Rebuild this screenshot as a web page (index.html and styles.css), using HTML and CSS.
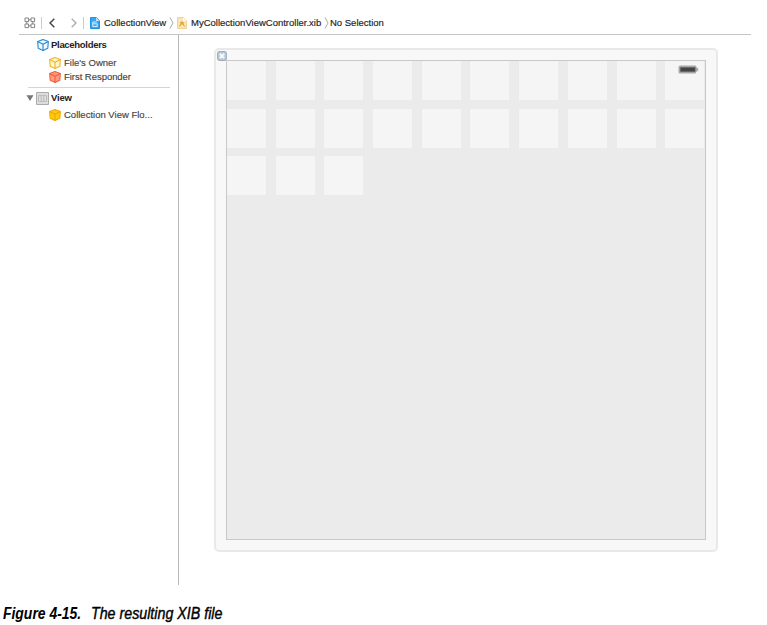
FILE: index.html
```html
<!DOCTYPE html>
<html lang="en">
<head>
<meta charset="utf-8">
<title>MyCollectionViewController.xib</title>
<link rel="stylesheet" href="styles.css">
</head>
<body>
<svg width="0" height="0" class="defs" aria-hidden="true">
  <symbol id="cube" viewBox="0 0 12 12">
    <path d="M6 .6 11.300 2.600 10.800 9.200 6 11.400 1.200 9.200 .7 2.600Z"/>
    <path d="M.7 2.600 6 5.200 11.300 2.600M6 5.200V11.400" fill="none"/>
  </symbol>
</svg>
<div class="window">
  <header class="jumpbar">
    <svg class="grid-icon" width="12" height="12" viewBox="0 0 12 12"><path d="M1 1h3.600v3.600H1zM7 1h3.600v3.600H7zM1 7h3.600v3.600H1zM7 7h3.600v3.600H7zM4.600 2.800H7M4.600 8.800H7M2.800 4.600V7M8.800 4.600V7"/></svg>
    <i class="rule r1"></i>
    <svg class="back" width="6" height="10" viewBox="0 0 6 10"><path d="M5.300 .8 1 5l4.300 4.200"/></svg>
    <svg class="forward" width="6" height="10" viewBox="0 0 6 10"><path d="M.7 .8 5 5 .7 9.200"/></svg>
    <i class="rule r2"></i>
    <svg class="doc" width="10" height="12" viewBox="0 0 10 12"><path d="M.5.5h5.700l3.300 3.200v7.800h-9z" fill="#35a7f2" stroke="#2293e2"/><path d="M6 .5v3.400h3.500" fill="#bfe5ff"/><path d="M2.800 5h4M2.800 5v4.500h4.400V6.800H3" fill="none" stroke="#d8f0ff"/></svg>
    <span class="crumb c1">CollectionView</span>
    <svg class="sep" width="5" height="12" viewBox="0 0 5 12"><path d="m1 .5 3 5.500-3 5.500"/></svg>
    <svg class="doc xib" width="10" height="12" viewBox="0 0 10 12"><path d="M.5.5h5.700l3.300 3.200v7.800h-9z" fill="#fbe5b4" stroke="#efd295"/><path d="M6 .5v3.400h3.500" fill="#fffaf0"/><path d="m2.500 9.500 2.500-5 2.500 5M3 5.200l4.200 3.200M2.500 8.500 7 5.500" fill="none" stroke="#e4a63c"/></svg>
    <span class="crumb c2">MyCollectionViewController.xib</span>
    <svg class="sep s2" width="5" height="12" viewBox="0 0 5 12"><path d="m1 .5 3 5.500-3 5.500"/></svg>
    <span class="crumb c3">No Selection</span>
  </header>
  <div class="body">
    <nav class="outline">
      <div class="row placeholders"><svg class="cube blue" width="12" height="12"><use href="#cube"/></svg><b class="t1">Placeholders</b></div>
      <div class="row child owner"><svg class="cube yellow" width="12" height="12"><use href="#cube"/></svg><span>File's Owner</span></div>
      <div class="row child responder"><svg class="cube red" width="12" height="12"><use href="#cube"/></svg><span class="t3">First Responder</span></div>
      <hr>
      <div class="row view"><svg class="triangle" width="8" height="6" viewBox="0 0 8 6"><path d="M.5.2h7L4 6z"/></svg><svg class="view-icon" width="13" height="13" viewBox="0 0 13 13"><path d="M.5.5h12v12H.5z" fill="#ddd" stroke="#aaa"/><path d="M2.500 3.500h8v6h-8zM5.200 3.500v6M7.800 3.500v6" fill="none" stroke="#bcbcbc"/></svg><b class="t4">View</b></div>
      <div class="row child flow"><svg class="cube gold" width="12" height="12"><use href="#cube"/></svg><span>Collection View Flo...</span></div>
    </nav>
    <main class="canvas">
      <section class="frame">
        <svg class="close" width="10" height="10" viewBox="0 0 10 10"><rect x=".7" y=".7" width="8.600" height="8.600" rx="2" fill="#c5d3e0" stroke="#9dacba" stroke-width="1.200"/><path d="m3 3 4 4M7 3 3 7" stroke="#fff" stroke-width="1.500"/></svg>
        <div class="screen">
          <div class="cells">
            <i></i><i></i><i></i><i></i><i></i><i></i><i></i><i></i><i></i><i></i>
            <i></i><i></i><i></i><i></i><i></i><i></i><i></i><i></i><i></i><i></i>
            <i></i><i></i><i></i>
          </div>
          <svg class="battery" width="21" height="9" viewBox="0 0 21 9"><path d="M2 .5H17.500L18.700 2.500 20.200 3.200V5.700L18.700 6.500 17.500 8.500H2Q.5 8.500 .5 7V2Q.5 .5 2 .5" fill="#aaa"/><path d="M2.300 2.300h14.900v4.400H2.300z" fill="#444" stroke="#777" stroke-width=".5"/></svg>
        </div>
      </section>
    </main>
  </div>
</div>
<p class="caption"><b>Figure 4-15.</b><span>The resulting XIB file</span></p>
</body>
</html>
```

FILE: styles.css
```css
* { box-sizing: border-box; }
body { margin: 0; width: 767px; height: 625px; overflow: hidden; background: #fff; font-family: "Liberation Sans", Arial, sans-serif; color: #222; }
svg { display: block; flex: none; }
.defs { position: absolute; }
.window { margin-left: 19px; width: 732px; height: 585px; padding-top: 11px; font-size: 9.5px; }
.jumpbar { height: 24px; border-bottom: 1px solid #c4c4c4; display: flex; align-items: center; padding-left: 5px; white-space: nowrap; }
.jumpbar path { stroke-width: 1; }
.grid-icon { fill: none; stroke: #858585; }
.rule { flex: none; width: 1px; height: 12px; background: #ccc; }
.r1 { margin-left: 5px; }
.back { margin-left: 7px; fill: none; stroke: #444; }
.jumpbar .back path { stroke-width: 1.5; }
.forward { margin-left: 16px; fill: none; stroke: #aaa; }
.jumpbar .forward path { stroke-width: 1.3; }
.r2 { margin-left: 6px; }
.doc { margin-left: 6px; }
.crumb { flex: none; line-height: 12px; -webkit-text-stroke: .15px #222; }
.c1 { width: 63px; margin-left: 4px; }
.sep { margin-left: 2px; fill: none; stroke: #aaa; }
.xib { margin-left: 3px; }
.c2 { width: 131px; margin-left: 4px; }
.c3 { margin-left: 1px; }
.body { display: flex; height: 550px; }
.outline { width: 160px; border-right: 1px solid #b8b8b8; padding-top: 3px; color: #444; }
.row { display: flex; align-items: center; white-space: nowrap; height: 14px; line-height: 14px; padding-left: 18px; }
.row b { color: #222; }
.row .cube + * { margin-left: 2px; }
.t1 { letter-spacing: -.3px; }
.child { padding-left: 30px; }
.child .cube + span { margin-left: 3px; -webkit-text-stroke: .15px #444; }
.t3 { letter-spacing: -.04px; }
.owner { margin-top: 4px; }
.cube { stroke-width: 1.1; stroke-linejoin: round; }
.blue { fill: #eef8ff; stroke: #2587cf; }
.yellow { fill: #fff5c9; stroke: #e9b52e; }
.red { fill: #ff9b7c; stroke: #f0603e; }
.gold { fill: #ffc90f; stroke: #eda900; }
hr { border: 0; border-top: 1px solid #d5d5d5; width: 142px; margin: 3px 0 3px 9px; }
.view { padding-left: 7px; }
.triangle { fill: #777; }
.view-icon { margin-left: 2px; }
.t4 { margin-left: 2px; letter-spacing: -.2px; }
.flow { margin-top: 3px; }
.canvas { flex: 1; padding: 13px 0 0 35px; }
.frame { position: relative; width: 504px; height: 504px; border: 2px solid #e9e9e9; border-radius: 5px; background: #f8f8f8; padding: 10px; }
.close { position: absolute; left: 1px; top: 1px; }
.screen { position: relative; width: 480px; height: 480px; border: 1px solid #c8c8c8; background: #ebebeb; overflow: hidden; }
.cells { display: grid; grid-template-columns: repeat(10, 39px); grid-auto-rows: 39px; column-gap: 9.7px; row-gap: 8.7px; }
.cells i { background: #f5f5f5; }
.battery { position: absolute; right: 6px; top: 4px; }
.caption { margin: 19px 0 0 3px; display: flex; font-size: 16px; line-height: 19px; font-style: italic; color: #000; white-space: nowrap; }
.caption b, .caption span { display: block; transform-origin: 0 50%; }
.caption b { width: 88px; transform: scaleX(.87); }
.caption span { transform: scaleX(.89); -webkit-text-stroke: .4px #000; }
```
